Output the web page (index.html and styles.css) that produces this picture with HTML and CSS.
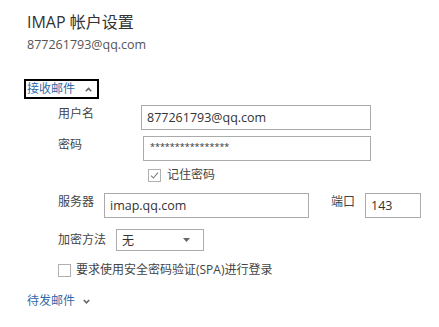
FILE: index.html
```html
<!DOCTYPE html>
<html lang="zh-CN">
<head>
  <meta charset="UTF-8" />
  <title>IMAP 帐户设置</title>
  <link rel="stylesheet" href="styles.css">
</head>
<body>
  <div class="page">
    <div class="title">IMAP 帐户设置</div>
    <div class="account">877261793@qq.com</div>

    <div class="section-head focused">
      <span>接收邮件</span>
      <svg class="chev" width="7" height="5" viewBox="0 0 7 5"><path d="M0.8 4.2 L3.5 1.4 L6.2 4.2" fill="none" stroke="#666" stroke-width="1.6"/></svg>
    </div>

    <div class="fields">
      <div class="row row-user">
        <div class="label">用户名</div>
        <div class="input wide">877261793@qq.com</div>
      </div>
      <div class="row row-pass">
        <div class="label">密码</div>
        <div class="input wide pass">****************</div>
      </div>
      <div class="row row-remember">
        <span class="box">
          <svg width="11" height="11" viewBox="0 0 11 11"><path d="M2 5.6 L4.4 8 L9 2.6" fill="none" stroke="#808080" stroke-width="1.1"/></svg>
        </span>
        <span class="check-text">记住密码</span>
      </div>
      <div class="row row-server">
        <div class="label">服务器</div>
        <div class="input server">imap.qq.com</div>
        <div class="label port-label">端口</div>
        <div class="input port">143</div>
      </div>
      <div class="row row-crypt">
        <div class="label">加密方法</div>
        <div class="select">
          <span>无</span>
          <svg width="7" height="4" viewBox="0 0 7 4"><path d="M0 0 L7 0 L3.5 4 Z" fill="#666"/></svg>
        </div>
      </div>
      <div class="row row-spa">
        <span class="box"></span>
        <span class="check-text">要求使用安全密码验证(SPA)进行登录</span>
      </div>
    </div>

    <div class="section-head">
      <span>待发邮件</span>
      <svg class="chev" width="7" height="5" viewBox="0 0 7 5"><path d="M0.8 1 L3.5 3.8 L6.2 1" fill="none" stroke="#666" stroke-width="1.6"/></svg>
    </div>
  </div>
</body>
</html>
```

FILE: styles.css
```css
body {
  margin: 0;
  background: #ffffff;
  color: #444444;
  font-family: "Open Sans", "Noto Sans CJK SC", sans-serif;
}
.page {
  padding: 11px 0 0 27px;
}
.title {
  font-size: 16px;
  line-height: 22px;
  color: #333333;
}
.account {
  font-size: 12.5px;
  line-height: 18px;
  margin-top: 3px;
  color: #555555;
}
.section-head {
  display: inline-flex;
  align-items: center;
  gap: 10px;
  font-size: 12px;
  line-height: 16px;
  color: #2f6aa8;
  margin-top: 25px;
  padding: 0 5px 0 1px;
  margin-left: -3px;
  border: 2px solid transparent;
}
.section-head.focused {
  border-color: #000000;
}
.section-head + .fields {
  margin-top: 6px;
}
.fields {
  padding-left: 31px;
}
.row {
  display: flex;
  align-items: flex-start;
}
.label {
  font-size: 12px;
  line-height: 16px;
  padding-top: 1px;
  color: #444444;
}
.input {
  box-sizing: border-box;
  height: 25px;
  border: 1px solid #ababab;
  font-size: 12.5px;
  line-height: 23px;
  padding: 0 5px;
  color: #333333;
}
.row-user .label { width: 83px; }
.row-pass { margin-top: 6px; }
.row-pass .label { width: 85px; }
.wide { width: 230px; }
.row-pass .wide { width: 228px; }
.pass {
  font-size: 9px;
  line-height: 19px;
  padding-left: 6px;
}
.row-remember {
  margin-top: 5px;
  padding-left: 90px;
  align-items: center;
}
.box {
  box-sizing: border-box;
  width: 13px;
  height: 13px;
  border: 1px solid #b0b0b0;
  display: flex;
  align-items: center;
  justify-content: center;
  margin-right: 6px;
}
.check-text {
  font-size: 12px;
  line-height: 18px;
  color: #444444;
}
.row-server { margin-top: 9px; }
.row-server .label { width: 46px; }
.server { width: 205px; }
.row-server .port-label {
  width: 34px;
  margin-left: 22px;
}
.port { width: 56px; }
.row-crypt { margin-top: 11px; }
.row-crypt .label { width: 58px; padding-top: 3px; }
.select {
  box-sizing: border-box;
  width: 88px;
  height: 22px;
  border: 1px solid #ababab;
  display: flex;
  align-items: center;
  justify-content: space-between;
  padding: 0 13px 0 5px;
  font-size: 12px;
  color: #333333;
}
.row-spa {
  margin-top: 10px;
  align-items: center;
}
.row-spa .box { margin-right: 5px; }
.fields + .section-head {
  margin-top: 14px;
  border: none;
  margin-left: 0;
  padding: 0;
  gap: 8px;
}
```
